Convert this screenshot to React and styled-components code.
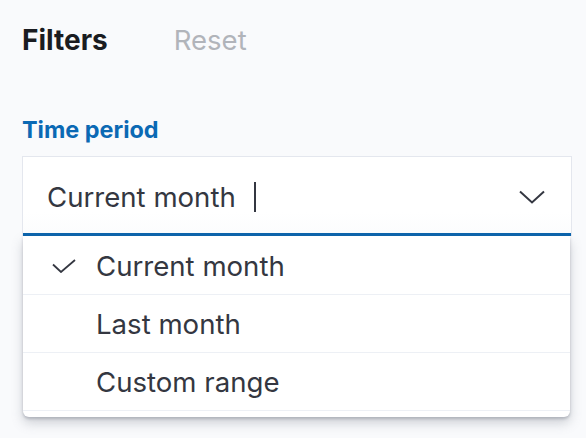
import styled, { createGlobalStyle } from "styled-components";

const GlobalStyle = createGlobalStyle`
  html, body {
    margin: 0;
    padding: 0;
    background: #f9fafc;
  }
  body {
    font-family: Inter, "Noto Sans", sans-serif;
    color: #343741;
  }
`;

const Page = styled.main`
  width: 586px;
  height: 438px;
  padding: 22px 14px 0 22px;
  box-sizing: border-box;
  overflow: hidden;
`;

const Header = styled.div`
  display: flex;
  align-items: baseline;
  gap: 66px;
  height: 40px;
`;

const Title = styled.h2`
  margin: 0;
  font-size: 28px;
  font-weight: 700;
  color: #1a1c21;
  line-height: 36px;
`;

const ResetButton = styled.button`
  border: 0;
  background: none;
  padding: 0;
  font-family: inherit;
  font-size: 27.5px;
  color: #b1b4ba;
  line-height: 36px;
`;

const FormRow = styled.div`
  margin-top: 52px;
  display: flex;
  flex-direction: column;
  gap: 11px;
`;

const Label = styled.label`
  font-size: 23.4px;
  font-weight: 700;
  color: #0b69b4;
  line-height: 31px;
`;

const Combo = styled.div`
  position: relative;
  width: 550px;
`;

const Field = styled.div`
  height: 80px;
  box-sizing: border-box;
  border: 1px solid #e4e7ee;
  border-bottom: 0;
  background: linear-gradient(#ffffff 70%, #fbfcfd);
  box-shadow: inset 0 -3px 0 #0b64ad;
  display: flex;
  align-items: center;
  padding: 0 24px;
`;

const Value = styled.span`
  font-size: 27.6px;
  color: #343741;
`;

const Caret = styled.span`
  width: 2px;
  height: 30px;
  margin-left: 18px;
  background: #343741;
`;

const Chevron = styled.svg`
  margin-left: auto;
  margin-right: 2px;
  width: 26px;
  height: 14px;
`;

const List = styled.ul`
  position: absolute;
  top: 80px;
  left: 1px;
  right: 2px;
  margin: 0;
  padding: 1px 0 6px;
  list-style: none;
  background: #fff;
  border-radius: 0 0 6px 6px;
  box-shadow: 0 6px 12px rgba(105, 112, 125, 0.3),
    0 2px 3px rgba(105, 112, 125, 0.35);
`;

const Option = styled.li`
  height: 58px;
  box-sizing: border-box;
  border-bottom: 1px solid #edf0f5;
  display: flex;
  align-items: center;
  padding-left: 29px;
  gap: 20px;
  font-size: 27.6px;
  color: #343741;
`;

const Check = styled.svg`
  width: 24px;
  height: 14px;
  visibility: ${(p) => (p.$on ? "visible" : "hidden")};
`;

const options = [
  { label: "Current month", checked: true },
  { label: "Last month" },
  { label: "Custom range" },
];

export default function App() {
  return (
    <>
      <GlobalStyle />
      <Page>
        <Header>
          <Title>Filters</Title>
          <ResetButton>Reset</ResetButton>
        </Header>
        <FormRow>
          <Label>Time period</Label>
          <Combo>
            <Field>
              <Value>Current month</Value>
              <Caret />
              <Chevron viewBox="0 0 26 14">
                <path
                  d="M1 1.5 L13 12.5 L25 1.5"
                  fill="none"
                  stroke="#343741"
                  strokeWidth="2"
                />
              </Chevron>
            </Field>
            <List>
              {options.map((o) => (
                <Option key={o.label}>
                  <Check $on={o.checked} viewBox="0 0 24 14">
                    <path
                      d="M1 5.5 L9 13 L23 1"
                      fill="none"
                      stroke="#343741"
                      strokeWidth="1.8"
                    />
                  </Check>
                  {o.label}
                </Option>
              ))}
            </List>
          </Combo>
        </FormRow>
      </Page>
    </>
  );
}
